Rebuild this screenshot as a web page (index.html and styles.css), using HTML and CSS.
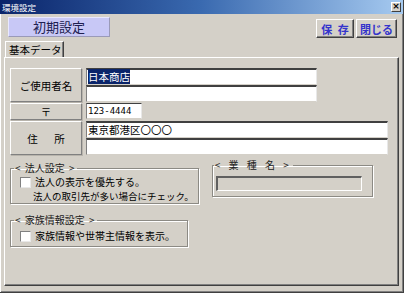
FILE: index.html
```html
<!DOCTYPE html>
<html lang="ja">
<head>
  <meta charset="UTF-8" />
  <meta name="viewport" content="width=device-width, initial-scale=1.0" />
  <link rel="stylesheet" href="styles.css">
  <title>環境設定</title>
</head>
<body>
<div class="window">
  <div class="titlebar">
    <span class="title">環境設定</span>
    <span class="close">×</span>
  </div>

  <div class="content">
    <div class="toolbar">
      <div class="caption">初期設定</div>
      <div class="actions">
        <button class="btn btn-save">保 存</button>
        <button class="btn">閉じる</button>
      </div>
    </div>

    <div class="tabs">
      <div class="tab">基本データ</div>
    </div>

    <div class="panel">
      <div class="form">
        <div class="label">ご使用者名</div>
        <div class="fields">
          <div class="input w-name"><span class="selected">日本商店</span></div>
          <div class="input w-name"></div>
        </div>

        <div class="label">〒</div>
        <div class="fields">
          <div class="input w-zip">123-4444</div>
        </div>

        <div class="label spaced">住　所</div>
        <div class="fields">
          <div class="input w-addr">東京都港区〇〇〇</div>
          <div class="input w-addr"></div>
        </div>
      </div>

      <div class="groups">
        <div class="left-col">
          <fieldset class="group corp">
            <legend>&lt; 法人設定 &gt;</legend>
            <div class="check-row"><span class="check"></span>法人の表示を優先する。</div>
            <div class="note">法人の取引先が多い場合にチェック。</div>
          </fieldset>

          <fieldset class="group family">
            <legend>&lt; 家族情報設定 &gt;</legend>
            <div class="check-row"><span class="check"></span>家族情報や世帯主情報を表示。</div>
          </fieldset>
        </div>

        <fieldset class="group industry">
          <legend>&lt; 業 種 名 &gt;</legend>
          <div class="sunken"></div>
        </fieldset>
      </div>
    </div>
  </div>
</div>
</body>
</html>
```

FILE: styles.css
```css
/* Base */
body {
  margin: 0;
  font-family: "Noto Sans CJK JP", "DejaVu Sans", sans-serif;
  font-size: 10px;
  color: #000;
  background: #d4d0c8;
}

/* Window frame */
.window {
  width: 404px;
  height: 293px;
  box-sizing: border-box;
  background: #d4d0c8;
  border-right: 1px solid #404040;
  border-bottom: 1px solid #404040;
  box-shadow: inset 1px 1px 0 #fff, inset -1px -1px 0 #808080;
  display: flex;
  flex-direction: column;
}

.titlebar {
  height: 14px;
  display: flex;
  justify-content: space-between;
  align-items: center;
  padding: 0 2px 0 2px;
  background: linear-gradient(to right, #0a246a, #3a6ab0 50%, #a6caf0);
}

.title {
  color: #fff;
  font-size: 8.5px;
  line-height: 14px;
}

.close {
  width: 10px;
  height: 10px;
  background: #d4d0c8;
  border: 1px solid;
  border-color: #fff #404040 #404040 #fff;
  box-sizing: border-box;
  font-family: "DejaVu Sans", sans-serif;
  font-size: 9px;
  font-weight: bold;
  line-height: 7px;
  text-align: center;
}

.content {
  flex: 1;
  display: flex;
  flex-direction: column;
  padding: 0 4px 6px 4px;
}

/* Toolbar */
.toolbar {
  display: flex;
  justify-content: space-between;
  align-items: flex-start;
  padding: 3px 2px 0 4px;
  height: 23px;
}

.caption {
  width: 102px;
  height: 20px;
  box-sizing: border-box;
  background: #c8c8f6;
  border: 1px solid;
  border-color: #e8e8ff #9a9ab8 #9a9ab8 #e8e8ff;
  color: #202050;
  font-size: 13px;
  line-height: 18px;
  text-align: center;
}

.actions {
  display: flex;
  gap: 2px;
  margin-top: 2px;
}

.btn {
  height: 19px;
  padding: 0;
  box-sizing: border-box;
  background: #d4d0c8;
  border: 1px solid;
  border-color: #fff #404040 #404040 #fff;
  box-shadow: inset -1px -1px 0 #808080;
  font-family: "Noto Sans CJK JP", sans-serif;
  font-size: 11px;
  font-weight: bold;
  line-height: 16px;
  color: #3434cc;
}

.btn-save {
  width: 38px;
  word-spacing: 3px;
  white-space: pre;
}

.btn:last-child {
  width: 41px;
}

/* Tab */
.tabs {
  display: flex;
  padding-left: 1px;
  margin-top: 1px;
}

.tab {
  width: 59px;
  height: 16px;
  box-sizing: border-box;
  border-left: 1px solid #fff;
  border-top: 1px solid #fff;
  border-right: 1px solid #404040;
  box-shadow: inset -1px 0 0 #808080;
  padding-left: 3px;
  font-size: 10.5px;
  line-height: 15px;
}

.panel {
  flex: 1;
  box-sizing: border-box;
  border: 1px solid;
  border-color: #fff #404040 #404040 #fff;
  box-shadow: inset -1px -1px 0 #808080;
  padding: 10px 0 0 5px;
}

/* Form grid */
.form {
  display: grid;
  grid-template-columns: 72px auto;
  column-gap: 4px;
  row-gap: 1px;
  justify-content: start;
}

.label {
  box-sizing: border-box;
  border: 1px solid;
  border-color: #fff #808080 #808080 #fff;
  box-shadow: 1px 1px 0 #b8b4ac;
  display: flex;
  align-items: center;
  justify-content: center;
  font-size: 10.5px;
}

.label.spaced {
  letter-spacing: 3px;
  padding-left: 3px;
}

.fields {
  display: flex;
  flex-direction: column;
}

.input {
  height: 17px;
  box-sizing: border-box;
  background: #fff;
  border-top: 2px solid #404040;
  border-left: 1px solid #808080;
  border-bottom: 1px solid #d4d0c8;
  border-right: 1px solid #e8e8e8;
  padding-left: 1px;
  font-size: 10.5px;
  line-height: 14px;
  white-space: nowrap;
}

.w-name { width: 231px; }
.w-zip { width: 56px; height: 16px; border-top-width: 1px; font-family: "DejaVu Sans Mono", monospace; font-size: 9px; line-height: 14px; }
.w-addr { width: 302px; }

.selected {
  background: #0a246a;
  color: #fff;
}

/* Groups */
.groups {
  display: flex;
  align-items: flex-start;
  gap: 13px;
  margin-top: 4px;
}

.left-col {
  display: flex;
  flex-direction: column;
  gap: 10px;
  margin-top: 3px;
}

.group {
  margin: 0;
  box-sizing: border-box;
  border: 1px solid #8c8a84;
  box-shadow: inset 1px 1px 0 #fff, 1px 1px 0 #fff;
  padding: 1px 4px 0 9px;
  white-space: nowrap;
}

.group legend {
  padding: 0 2px 0 1px;
  margin-left: -6px;
  font-size: 10px;
  line-height: 12px;
  color: #222;
  word-spacing: 2px;
}

.corp { width: 183px; }
.family { width: 178px; padding-top: 3px; padding-bottom: 3px; }

.industry {
  width: 161px;
  padding: 5px 10px 5px 3px;
}

.industry legend {
  margin-left: -2px;
  letter-spacing: 2px;
}

.check-row {
  display: flex;
  align-items: center;
  gap: 4px;
  font-size: 10px;
  line-height: 14px;
}

.check {
  width: 9px;
  height: 9px;
  background: #fff;
  border-top: 1px solid #808080;
  border-left: 1px solid #808080;
  border-right: 1px solid #e8e8e8;
  border-bottom: 1px solid #e8e8e8;
}

.note {
  padding-left: 13px;
  font-size: 9.5px;
  line-height: 14px;
}

.sunken {
  height: 15px;
  box-sizing: border-box;
  border-top: 2px solid #606060;
  border-left: 2px solid #606060;
  border-bottom: 1px solid #fff;
  border-right: 1px solid #fff;
}
```
